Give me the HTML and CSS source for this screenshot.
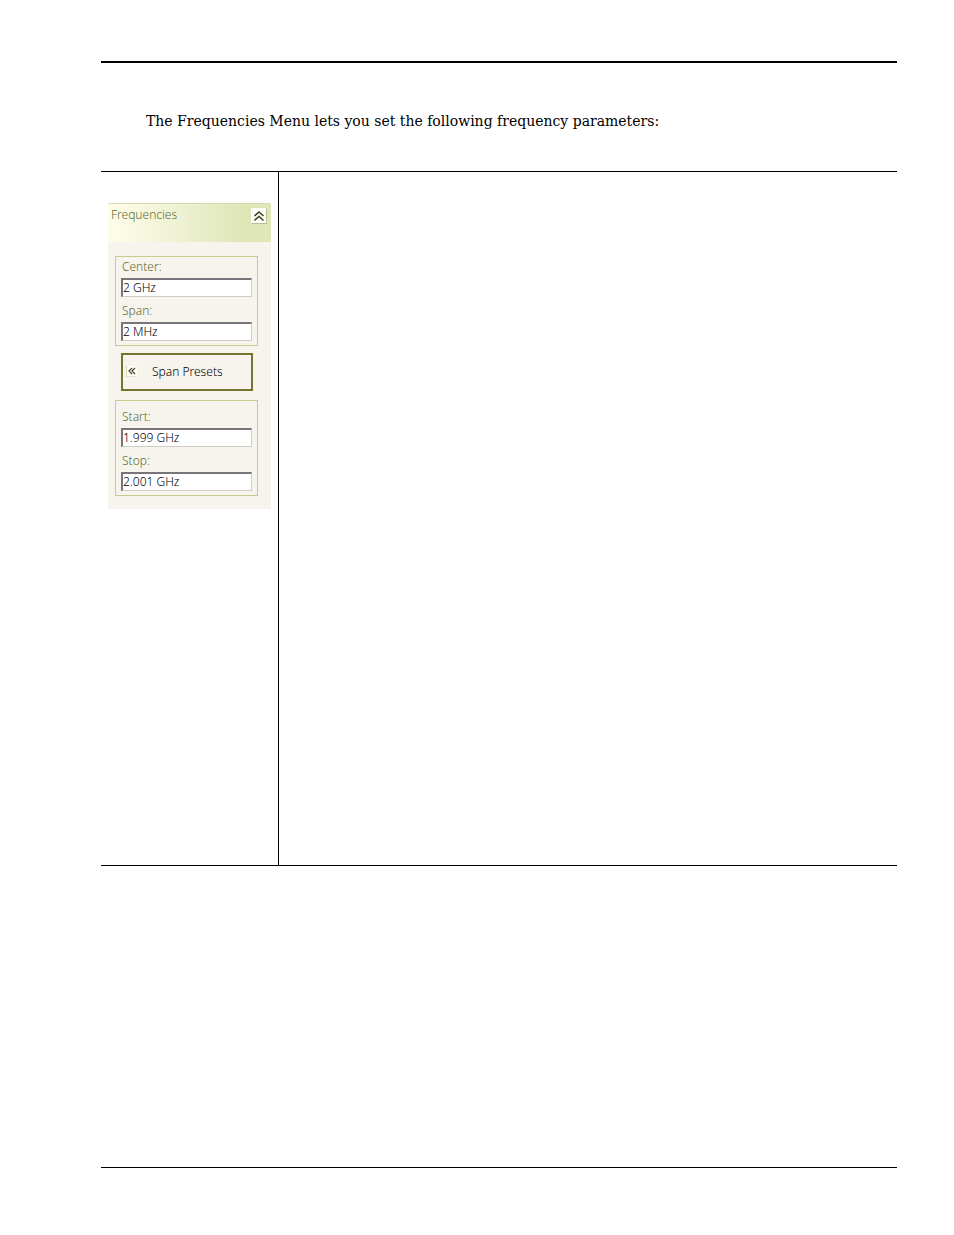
FILE: index.html
```html
<!DOCTYPE html>
<html lang="en">
<head>
    <meta charset="UTF-8">
    <meta name="viewport" content="width=device-width, initial-scale=1.0">
    <title>Frequencies Menu</title>
    <link rel="stylesheet" href="styles.css">
</head>
<body>
    <main class="page">
        <p class="intro">The Frequencies Menu lets you set the following frequency parameters:</p>

        <div class="menu-row">
            <div class="menu-cell">
                <section class="panel">
                    <div class="panel-header">
                        <h1>Frequencies</h1>
                        <button type="button" class="collapse" aria-label="Collapse">
                            <svg width="12" height="12" viewBox="0 0 12 12">
                                <path d="M1.5 6 L6 2 L10.5 6 M1.5 10.5 L6 6.5 L10.5 10.5" />
                            </svg>
                        </button>
                    </div>
                    <div class="panel-body">
                        <div class="group">
                            <label for="center">Center:</label>
                            <input type="text" id="center" value="2 GHz">
                            <label for="span">Span:</label>
                            <input type="text" id="span" value="2 MHz">
                        </div>
                        <button type="button" class="presets">
                            <span class="presets-icon">
                                <svg width="8" height="8" viewBox="0 0 8 8">
                                    <path d="M4 1 L1 4 L4 7 M7 1 L4 4 L7 7" />
                                </svg>
                            </span>
                            Span Presets
                        </button>
                        <div class="group group-range">
                            <label for="start">Start:</label>
                            <input type="text" id="start" value="1.999 GHz">
                            <label for="stop">Stop:</label>
                            <input type="text" id="stop" value="2.001 GHz">
                        </div>
                    </div>
                </section>
            </div>
            <div class="description-cell"></div>
        </div>
    </main>
</body>
</html>
```

FILE: styles.css
```css
* {
    box-sizing: border-box;
}

body {
    margin: 0;
    padding: 61px 57px 67px 101px;
    min-height: 100vh;
    display: flex;
    background-color: white;
    color: black;
}

.page {
    flex: 1;
    border-top: 2px solid black;
    border-bottom: 1px solid black;
}

.intro {
    margin: 46px 0 38px 45px;
    font-family: "DejaVu Serif", serif;
    font-size: 14px;
    line-height: 24px;
}

.menu-row {
    display: flex;
    min-height: 695px;
    border-top: 1px solid black;
    border-bottom: 1px solid black;
}

.menu-cell {
    width: 178px;
    padding: 31px 7px;
    border-right: 1px solid black;
}

.description-cell {
    flex: 1;
}

/* Frequencies panel */
.panel {
    background-color: #f7f4ee;
    font-family: "Noto Sans", sans-serif;
    font-size: 12px;
    font-weight: 300;
    color: #5c6b2e;
}

.panel-header {
    display: flex;
    justify-content: space-between;
    align-items: flex-start;
    height: 39px;
    padding: 3px 4px 0 3px;
    border-top: 1px solid #d3dba6;
    border-radius: 3px 3px 0 0;
    background: linear-gradient(to right, #fffdea, #eef1d3 45%, #dfe6b8 80%, #dfe6b8);
}

.panel-header h1 {
    margin: 0;
    font-size: 12px;
    font-weight: 300;
    line-height: 16px;
}

.collapse {
    display: flex;
    align-items: center;
    justify-content: center;
    width: 16px;
    height: 16px;
    margin-top: 1px;
    padding: 0;
    border: 1px solid white;
    border-right-color: #b9bf92;
    border-bottom-color: #b9bf92;
    background-color: #fdfdf8;
}

.collapse path {
    fill: none;
    stroke: #32491f;
    stroke-width: 1.6;
}

.panel-body {
    padding: 14px 13px 13px 7px;
}

.group {
    display: flex;
    flex-direction: column;
    padding: 1px 5px 4px;
    border: 1px solid #c5cc8e;
}

.group-range {
    padding-top: 7px;
}

.group label {
    margin-bottom: 2px;
    padding-left: 1px;
    line-height: 18px;
}

.group input {
    width: 100%;
    height: 19px;
    padding: 0 0 1px;
    border: 1px solid #cfccc6;
    border-top: 2px solid #77757a;
    border-left: 2px solid #77757a;
    background-color: white;
    color: black;
    font: inherit;
}

.group input + label {
    margin-top: 5px;
}

.presets {
    display: flex;
    align-items: center;
    gap: 15px;
    width: calc(100% - 11px);
    height: 38px;
    margin: 7px 5px 9px 6px;
    padding: 0 3px 2px;
    border: 2px solid #75742f;
    background-color: #f7f4ee;
    color: black;
    font: inherit;
}

.presets-icon {
    display: flex;
    align-items: center;
    justify-content: center;
    width: 11px;
    height: 11px;
    border-left: 1px solid #d6d3b0;
    border-bottom: 1px solid #e6e3cc;
    background-color: #fdfcf8;
}

.presets-icon path {
    fill: none;
    stroke: #45482a;
    stroke-width: 1.2;
}
```
